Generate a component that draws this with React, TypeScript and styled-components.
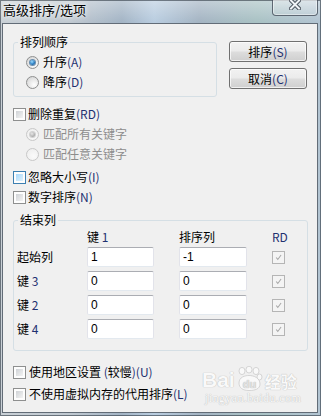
import { Fragment } from "react";
import styled, { createGlobalStyle } from "styled-components";

const GlobalStyle = createGlobalStyle`
  html, body {
    margin: 0;
    padding: 0;
  }
  body {
    font-family: "Noto Sans CJK SC", "Noto Sans", sans-serif;
    font-size: 12px;
    color: #000;
  }
`;

const Window = styled.div`
  position: relative;
  width: 321px;
  height: 416px;
  box-sizing: border-box;
  display: flex;
  flex-direction: column;
  padding: 0 3px 3px 2px;
  overflow: hidden;
  background:
    linear-gradient(180deg, rgba(255, 255, 255, 0.35) 0px, rgba(255, 255, 255, 0) 22px),
    linear-gradient(
      90deg,
      #c9d0d6 0%,
      #bfc8d0 22%,
      #a3b4c5 38%,
      #b9cde0 48%,
      #a4b4c3 62%,
      #a9c2c4 80%,
      #b2c4d2 100%
    );
  box-shadow: inset 0 0 0 1px rgba(45, 55, 65, 0.6);
`;

const TitleBar = styled.div`
  height: 23px;
  flex: none;
  display: flex;
  align-items: flex-start;
  justify-content: space-between;
  padding-left: 1px;
`;

const Title = styled.div`
  font-size: 13px;
  line-height: 17px;
  padding-top: 1px;
  color: #000;
  text-shadow: 0 0 6px rgba(255, 255, 255, 0.95), 0 0 3px rgba(255, 255, 255, 0.9);
`;

const CloseButton = styled.div`
  width: 46px;
  height: 16px;
  box-sizing: border-box;
  border: 1px solid rgba(55, 65, 78, 0.75);
  border-top: none;
  border-radius: 0 0 4px 4px;
  background: linear-gradient(180deg, rgba(255, 255, 255, 0.35), rgba(255, 255, 255, 0.1));
  box-shadow: inset 0 0 0 1px rgba(255, 255, 255, 0.45);
  display: flex;
  justify-content: center;
  align-items: flex-start;
`;

const Client = styled.div`
  position: relative;
  flex: 1;
  background: #f0f0f0;
  border: 1px solid #626c77;
  padding: 0 9px 0 10px;
`;

const TopRow = styled.div`
  display: flex;
  align-items: flex-start;
  margin-top: 11px;
`;

const Group = styled.fieldset<{ $padLeft: number }>`
  margin: 0;
  min-width: 0;
  box-sizing: border-box;
  border: 1px solid #d5dfe5;
  border-radius: 3px;
  padding: 0 0 0 ${(p) => p.$padLeft}px;
`;

const OrderGroup = styled(Group)`
  width: 204px;
  padding-top: 3px;
  padding-bottom: 4px;
`;

const EndGroup = styled(Group)`
  margin-top: 6px;
  padding-bottom: 11px;
`;

const Legend = styled.legend<{ $shift: number }>`
  line-height: 14px;
  padding: 0 2px;
  margin-left: ${(p) => p.$shift}px;
`;

const ButtonColumn = styled.div`
  display: flex;
  flex-direction: column;
  gap: 6px;
  margin-left: 12px;
  padding-top: 6px;
`;

const Button = styled.button`
  width: 78px;
  height: 21px;
  box-sizing: border-box;
  padding: 0;
  border: 1px solid #707070;
  border-radius: 3px;
  background: linear-gradient(180deg, #f2f2f2 0%, #ebebeb 48%, #dddddd 52%, #cfcfcf 100%);
  box-shadow: inset 0 0 0 1px rgba(255, 255, 255, 0.7);
  font-family: inherit;
  font-size: 12px;
  line-height: 17px;
  color: #000;
`;

const OptionRow = styled.label<{ $indent?: number; $gap?: number; $top?: number; $disabled?: boolean }>`
  display: flex;
  align-items: center;
  height: 20px;
  gap: ${(p) => p.$gap ?? 2}px;
  padding-left: ${(p) => p.$indent ?? 0}px;
  margin-top: ${(p) => p.$top ?? 0}px;
  color: ${(p) => (p.$disabled ? "#8d8d8d" : "#000")};
  line-height: 20px;
  white-space: nowrap;
`;

const Latin = styled.span<{ $disabled?: boolean }>`
  color: ${(p) => (p.$disabled ? "#8d8d8d" : "#1f3170")};
`;

const CheckBox = styled.span<{ $hover?: boolean; $disabled?: boolean }>`
  flex: none;
  width: 13px;
  height: 13px;
  box-sizing: border-box;
  display: inline-flex;
  align-items: center;
  justify-content: center;
  padding: 2px;
  border: 1px solid ${(p) => (p.$hover ? "#3c7fb1" : p.$disabled ? "#b5b5b5" : "#8e8f8f")};
  background: ${(p) => (p.$disabled ? "#f4f4f4" : "#fdfdfd")};

  &::before {
    content: "";
    display: ${(p) => (p.$disabled ? "none" : "block")};
    width: 7px;
    height: 7px;
    background: ${(p) =>
      p.$hover
        ? "linear-gradient(135deg, #a9d9fb 0%, #def1fd 100%)"
        : "linear-gradient(135deg, #cfd2d6 0%, #f3f3f3 100%)"};
  }
`;

const Radio = styled.span<{ $checked?: boolean; $disabled?: boolean }>`
  flex: none;
  width: 13px;
  height: 13px;
  box-sizing: border-box;
  border-radius: 50%;
  display: inline-flex;
  align-items: center;
  justify-content: center;
  border: 1px solid ${(p) => (p.$disabled ? "#c8c8c8" : "#8e8f8f")};
  background: ${(p) =>
    p.$disabled
      ? "radial-gradient(circle at 60% 65%, #fafafa 0%, #ececec 100%)"
      : "radial-gradient(circle at 65% 70%, #ffffff 0%, #e2e2e2 60%, #cdcdcd 100%)"};

  &::after {
    content: "";
    display: ${(p) => (p.$checked ? "block" : "none")};
    width: 5px;
    height: 5px;
    border-radius: 50%;
    background: ${(p) =>
      p.$disabled
        ? "radial-gradient(circle at 40% 35%, #e8e8e8, #a9a9a9 70%)"
        : "radial-gradient(circle at 40% 35%, #9fdcff, #2a7fc4 55%, #0f3f72 100%)"};
    box-shadow: 0 0 0 1px ${(p) => (p.$disabled ? "#d2d2d2" : "#6a8eae")};
  }
`;

const KeyGrid = styled.div`
  display: grid;
  grid-template-columns: 70px 92px 93px 1fr;
  grid-template-rows: 16px repeat(4, 20px);
  row-gap: 4px;
  align-items: center;
`;

const Header = styled.div`
  align-self: stretch;
  box-sizing: border-box;
  padding-top: 3px;
  line-height: 13px;
  white-space: nowrap;
`;

const RowLabel = styled.div`
  line-height: 20px;
  white-space: nowrap;
`;

const Field = styled.input<{ $w: number }>`
  width: ${(p) => p.$w}px;
  height: 20px;
  box-sizing: border-box;
  margin: 0;
  padding: 0 3px;
  border: 1px solid #e2e3ea;
  border-top-color: #abadb3;
  border-bottom-color: #e3e9ef;
  border-radius: 2px;
  background: #fff;
  font-family: "Liberation Sans", Arial, sans-serif;
  font-size: 12px;
  color: #000;
  outline: none;
`;

const CheckMark = styled.svg`
  display: block;
`;

const Watermark = styled.div`
  position: absolute;
  left: 199px;
  top: 342px;
  display: flex;
  flex-direction: column;
  align-items: flex-start;
  pointer-events: none;
  color: #f9f9f9;
  text-shadow: 0 0 1px #bdbdbd, 0 0 1px #c6c6c6;
`;

const WmTop = styled.div`
  display: flex;
  align-items: flex-end;
  height: 25px;
`;

const WmBai = styled.span`
  font-family: "Liberation Sans", Arial, sans-serif;
  font-weight: bold;
  font-size: 21px;
  line-height: 22px;
`;

const WmJy = styled.span`
  font-family: "Noto Sans CJK SC", sans-serif;
  font-weight: bold;
  font-size: 16px;
  line-height: 20px;
  margin-left: 2px;
`;

const WmUrl = styled.span`
  font-family: "Liberation Serif", serif;
  font-size: 12px;
  line-height: 13px;
  letter-spacing: 0.4px;
  margin-top: 1px;
  margin-left: 3px;
`;

function Paw() {
  return (
    <svg width="28" height="25" viewBox="0 0 28 25">
      <g fill="#f9f9f9" stroke="#cbcbcb" strokeWidth="0.8">
        <ellipse cx="7" cy="5" rx="3" ry="3.6" />
        <ellipse cx="14" cy="3.6" rx="3" ry="3.4" />
        <ellipse cx="21" cy="5" rx="3" ry="3.6" />
        <ellipse cx="24.5" cy="11" rx="2.5" ry="3" />
        <path d="M4 17 C4 11 10 9.5 14 9.5 C19 9.5 25 12 25 18 C25 23 20 24.5 14 24.5 C8 24.5 4 22 4 17 Z" />
      </g>
      <text
        x="14.5"
        y="21.5"
        textAnchor="middle"
        fontFamily="Liberation Sans, Arial, sans-serif"
        fontWeight="bold"
        fontSize="11"
        fill="#e2e2e2"
      >
        du
      </text>
    </svg>
  );
}

function CloseGlyph() {
  return (
    <svg width="12" height="11" viewBox="0 0 12 11" style={{ marginTop: -1 }}>
      <path d="M2 1.5 L10 9.5 M10 1.5 L2 9.5" stroke="#4b535d" strokeWidth="4" strokeLinecap="square" />
      <path d="M2 1.5 L10 9.5 M10 1.5 L2 9.5" stroke="#f1f4f7" strokeWidth="2" strokeLinecap="square" />
    </svg>
  );
}

function DisabledCheck() {
  return (
    <CheckBox $disabled>
      <CheckMark width="9" height="9" viewBox="0 0 9 9">
        <path d="M1.5 4.5 L3.6 7 L7.8 1.2" fill="none" stroke="#a6a6a6" strokeWidth="1.3" />
      </CheckMark>
    </CheckBox>
  );
}

const keyRows = [
  { label: "起始列", num: "", key: "1", col: "-1" },
  { label: "键", num: "3", key: "0", col: "0" },
  { label: "键", num: "2", key: "0", col: "0" },
  { label: "键", num: "4", key: "0", col: "0" },
];

export default function App() {
  return (
    <>
      <GlobalStyle />
      <Window>
        <TitleBar>
          <Title>高级排序/选项</Title>
          <CloseButton>
            <CloseGlyph />
          </CloseButton>
        </TitleBar>
        <Client>
          <TopRow>
            <OrderGroup $padLeft={12}>
              <Legend $shift={-8}>排列顺序</Legend>
              <OptionRow $gap={4}>
                <Radio $checked />
                <span>
                  升序<Latin>(A)</Latin>
                </span>
              </OptionRow>
              <OptionRow $gap={4}>
                <Radio />
                <span>
                  降序<Latin>(D)</Latin>
                </span>
              </OptionRow>
            </OrderGroup>
            <ButtonColumn>
              <Button>
                排序<Latin>(S)</Latin>
              </Button>
              <Button>
                取消<Latin>(C)</Latin>
              </Button>
            </ButtonColumn>
          </TopRow>

          <OptionRow $top={7}>
            <CheckBox />
            <span>
              删除重复<Latin>(RD)</Latin>
            </span>
          </OptionRow>
          <OptionRow $indent={13} $gap={4} $disabled>
            <Radio $checked $disabled />
            <span>匹配所有关键字</span>
          </OptionRow>
          <OptionRow $indent={13} $gap={4} $disabled>
            <Radio $disabled />
            <span>匹配任意关键字</span>
          </OptionRow>
          <OptionRow $top={3}>
            <CheckBox $hover />
            <span>
              忽略大小写<Latin>(I)</Latin>
            </span>
          </OptionRow>
          <OptionRow>
            <CheckBox />
            <span>
              数字排序<Latin>(N)</Latin>
            </span>
          </OptionRow>

          <EndGroup $padLeft={3}>
            <Legend $shift={1}>结束列</Legend>
            <KeyGrid>
              <span />
              <Header>
                键 <Latin>1</Latin>
              </Header>
              <Header>排序列</Header>
              <Header>
                <Latin>RD</Latin>
              </Header>
              {keyRows.map((row, i) => (
                <Fragment key={i}>
                  <RowLabel>
                    {row.label}
                    {row.num && (
                      <>
                        {" "}
                        <Latin>{row.num}</Latin>
                      </>
                    )}
                  </RowLabel>
                  <Field $w={67} readOnly value={row.key} />
                  <Field $w={68} readOnly value={row.col} />
                  <DisabledCheck />
                </Fragment>
              ))}
            </KeyGrid>
          </EndGroup>

          <OptionRow $top={11} $gap={3}>
            <CheckBox />
            <span>
              使用地区设置 <Latin>(</Latin>较慢<Latin>)(U)</Latin>
            </span>
          </OptionRow>
          <OptionRow $top={2} $gap={3}>
            <CheckBox />
            <span>
              不使用虚拟内存的代用排序<Latin>(L)</Latin>
            </span>
          </OptionRow>

          <Watermark>
            <WmTop>
              <WmBai>Bai</WmBai>
              <Paw />
              <WmJy>经验</WmJy>
            </WmTop>
            <WmUrl>jingyan.baidu.com</WmUrl>
          </Watermark>
        </Client>
      </Window>
    </>
  );
}
